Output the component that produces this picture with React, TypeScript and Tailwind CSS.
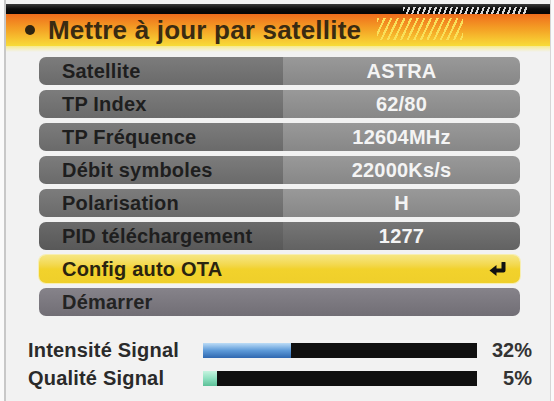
import React from 'react';

const font = { fontFamily: '"Liberation Sans", Arial, sans-serif' };

type Row = { label: string; value?: string; kind: 'normal' | 'dark' | 'active' | 'action' };

const rows: Row[] = [
  { label: 'Satellite', value: 'ASTRA', kind: 'normal' },
  { label: 'TP Index', value: '62/80', kind: 'normal' },
  { label: 'TP Fréquence', value: '12604MHz', kind: 'normal' },
  { label: 'Débit symboles', value: '22000Ks/s', kind: 'normal' },
  { label: 'Polarisation', value: 'H', kind: 'normal' },
  { label: 'PID téléchargement', value: '1277', kind: 'dark' },
  { label: 'Config auto OTA', kind: 'active' },
  { label: 'Démarrer', kind: 'action' },
];

const EnterIcon = () => (
  <svg width="18" height="14" viewBox="0 0 18 14" className="shrink-0">
    <path d="M14.5 1 V8.5 H6" fill="none" stroke="#111" strokeWidth="4" strokeLinejoin="round" strokeLinecap="round" />
    <path d="M0.5 8.5 L7.5 3 V14 Z" fill="#111" />
  </svg>
);

const MenuRow = ({ row }: { row: Row }) => {
  if (row.kind === 'active') {
    return (
      <div className="flex items-center h-[28px] rounded-[7px] bg-gradient-to-b from-[#f6e680] via-[#f2d22c] to-[#efcf2a] pl-[23px] pr-[13px] shadow-[0_0_0_1px_#f7eeb0]">
        <span className="flex-1 text-[20px] font-bold text-[#2a2410] leading-none tracking-[0.2px]">{row.label}</span>
        <EnterIcon />
      </div>
    );
  }
  if (row.kind === 'action') {
    return (
      <div className="flex items-center h-[28px] rounded-[7px] bg-gradient-to-b from-[#86838a] to-[#716e75] pl-[23px]">
        <span className="text-[20px] font-bold text-[#232323] leading-none tracking-[0.2px]">{row.label}</span>
      </div>
    );
  }
  const dark = row.kind === 'dark';
  return (
    <div className="flex h-[28px] rounded-[7px] overflow-hidden">
      <div
        className={`w-[244px] flex items-center pl-[23px] bg-gradient-to-b ${
          dark ? 'from-[#6a6a6a] to-[#585858]' : 'from-[#7c7c7c] to-[#6a6a6a]'
        }`}
      >
        <span className="text-[20px] font-bold text-[#1e1e1e] leading-none tracking-[0.2px]">{row.label}</span>
      </div>
      <div
        className={`flex-1 flex items-center justify-center bg-gradient-to-b ${
          dark ? 'from-[#767676] to-[#626262]' : 'from-[#999999] to-[#878787]'
        }`}
      >
        <span className="text-[20px] font-bold text-[#f4f4f4] leading-none tracking-[0.2px]">{row.value}</span>
      </div>
    </div>
  );
};

const SignalRow = ({ label, pct, fill }: { label: string; pct: number; fill: string }) => (
  <div className="flex items-center h-[16px]">
    <span className="w-[197px] pl-[22px] text-[20px] font-bold text-[#2a2a2a] leading-none whitespace-nowrap tracking-[0.2px]">
      {label}
    </span>
    <div className="w-[274px] h-[15px] bg-[#101010] flex">
      <div className={`h-full ${fill}`} style={{ width: `${pct}%` }} />
    </div>
    <span className="w-[55px] text-right text-[20px] font-bold text-[#333] leading-none">{pct}%</span>
  </div>
);

export default function App() {
  return (
    <div style={font} className="w-[554px] h-[401px] bg-[#fafafa] pl-[4px] pr-[3px] overflow-hidden">
      <div className="h-full bg-[#f2f2f2] border-l-2 border-r border-l-[#c8c8c8] border-r-[#d6d6d6] flex flex-col">
        {/* top strip */}
        <div className="mt-[4px] h-[10px] bg-gradient-to-b from-[#3a3a3a] via-[#0c0c0c] to-[#050505] relative">
          <div className="absolute left-[397px] top-[3px] w-[124px] h-[7px] bg-[repeating-linear-gradient(110deg,#d8d8d8_0_2px,transparent_2px_5px)]" />
        </div>
        {/* header */}
        <div className="h-[32px] bg-gradient-to-b from-[#ee6c1c] via-[#f4a426] to-[#f7dc38] relative flex items-center">
          <div className="absolute left-[371px] top-[4px] w-[86px] h-[22px] bg-[repeating-linear-gradient(115deg,#f9e05a_0_2px,transparent_2px_6px)]" />
          <div className="ml-[19px] w-[10px] h-[10px] rounded-full bg-[#2e2410]" />
          <span className="ml-[13px] text-[26px] font-bold text-[#3a2b12] leading-none tracking-[0.2px]">
            Mettre à jour par satellite
          </span>
        </div>
        <div className="h-[6px] bg-gradient-to-b from-[#f7ea8a] to-[#f2f2f2]" />
        {/* menu */}
        <div className="mt-[5px] ml-[33px] w-[481px] flex flex-col gap-[5px]">
          {rows.map((r) => (
            <MenuRow key={r.label} row={r} />
          ))}
        </div>
        {/* signal */}
        <div className="mt-[26px] flex flex-col gap-[12px]">
          <SignalRow
            label="Intensité Signal"
            pct={32}
            fill="bg-gradient-to-b from-[#bcdcf6] via-[#5d9ad8] to-[#2f68b0]"
          />
          <SignalRow
            label="Qualité Signal"
            pct={5}
            fill="bg-gradient-to-b from-[#c6f4e0] via-[#8ee0c0] to-[#5cc098]"
          />
        </div>
      </div>
    </div>
  );
}
